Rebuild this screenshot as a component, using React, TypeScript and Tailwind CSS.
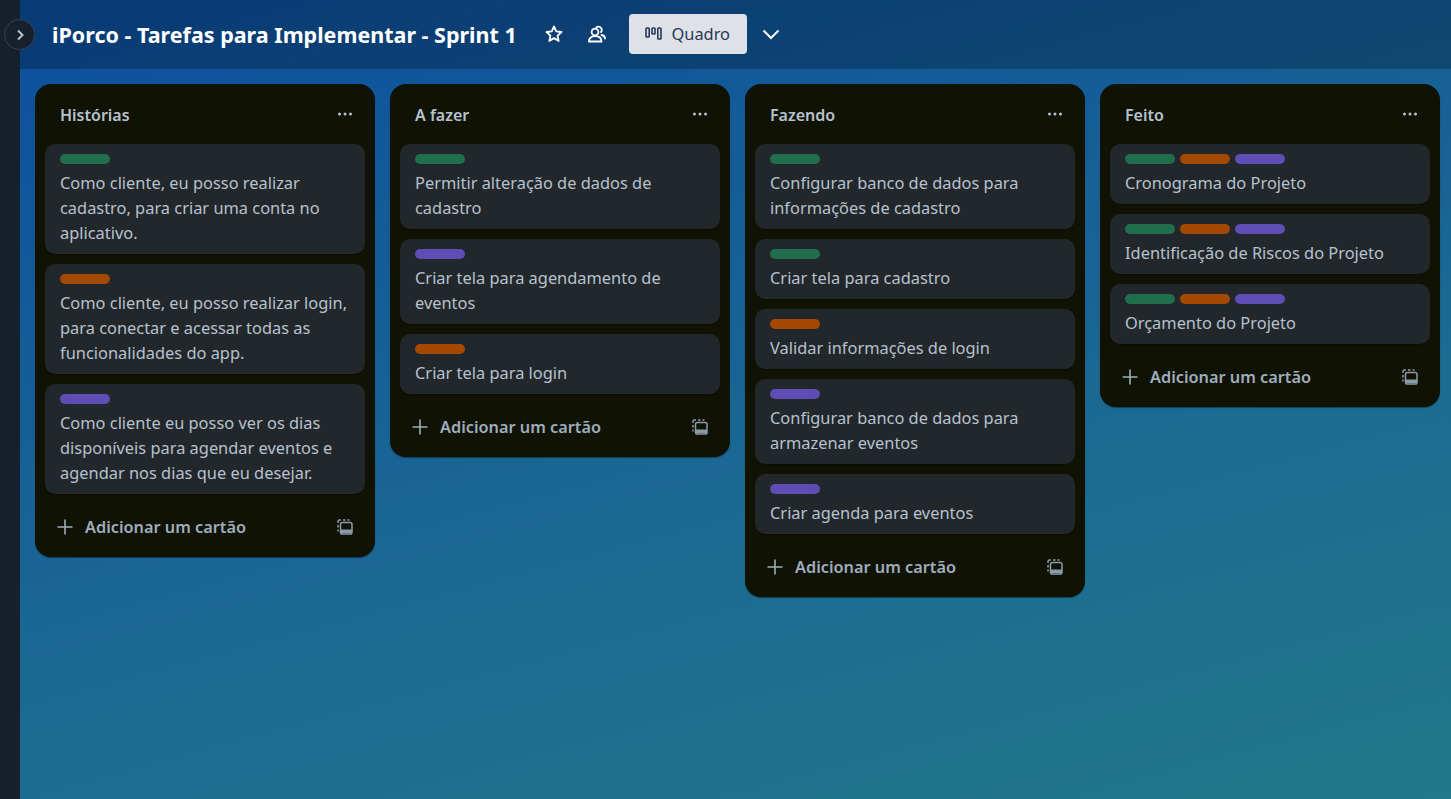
import React from "react";

const G = "bg-[#216e4e]";
const O = "bg-[#a54800]";
const P = "bg-[#5e4db2]";

type CardT = { labels: string[]; text: string };
type ListT = { title: string; cards: CardT[] };

const lists: ListT[] = [
  {
    title: "Histórias",
    cards: [
      { labels: [G], text: "Como cliente, eu posso realizar cadastro, para criar uma conta no aplicativo." },
      { labels: [O], text: "Como cliente, eu posso realizar login, para conectar e acessar todas as funcionalidades do app." },
      { labels: [P], text: "Como cliente eu posso ver os dias disponíveis para agendar eventos e agendar nos dias que eu desejar." },
    ],
  },
  {
    title: "A fazer",
    cards: [
      { labels: [G], text: "Permitir alteração de dados de cadastro" },
      { labels: [P], text: "Criar tela para agendamento de eventos" },
      { labels: [O], text: "Criar tela para login" },
    ],
  },
  {
    title: "Fazendo",
    cards: [
      { labels: [G], text: "Configurar banco de dados para informações de cadastro" },
      { labels: [G], text: "Criar tela para cadastro" },
      { labels: [O], text: "Validar informações de login" },
      { labels: [P], text: "Configurar banco de dados para armazenar eventos" },
      { labels: [P], text: "Criar agenda para eventos" },
    ],
  },
  {
    title: "Feito",
    cards: [
      { labels: [G, O, P], text: "Cronograma do Projeto" },
      { labels: [G, O, P], text: "Identificação de Riscos do Projeto" },
      { labels: [G, O, P], text: "Orçamento do Projeto" },
    ],
  },
];

function TemplateIcon() {
  return (
    <svg width="16" height="16" viewBox="0 0 16 16" fill="none" className="text-[#8c9bab]">
      <path d="M1 4V2.500A1.500 1.500 0 0 1 2.500 1H4M6 1h2.500M10.500 1H12.500M1 6v2.500M1 10.500V12.500" stroke="currentColor" strokeWidth="1.500" />
      <rect x="3.500" y="3.500" width="11.500" height="11.500" rx="1.800" stroke="currentColor" strokeWidth="1.500" />
      <rect x="3.500" y="10.500" width="11.500" height="3.500" fill="currentColor" />
    </svg>
  );
}

function List({ list }: { list: ListT }) {
  return (
    <div className="w-[340px] shrink-0 rounded-2xl bg-[#101204] px-[10px] shadow-[0_1px_1px_rgba(0,0,0,0.4)]">
      <div className="flex h-[60px] items-center justify-between pl-[15px] pr-[12px] pt-[2px]">
        <div className="text-[16px] font-semibold text-[#b6c2cf]">{list.title}</div>
        <svg width="16" height="16" viewBox="0 0 16 16" className="mb-[2px] text-[#b6c2cf]" fill="currentColor">
          <circle cx="2.500" cy="8" r="1.500" />
          <circle cx="8" cy="8" r="1.500" />
          <circle cx="13.500" cy="8" r="1.500" />
        </svg>
      </div>
      <div className="flex flex-col gap-[10px]">
        {list.cards.map((c) => (
          <div key={c.text} className="rounded-[10px] bg-[#22272b] px-[15px] pb-[9px] pt-[10px] shadow-[0_1px_1px_rgba(0,0,0,0.3)]">
            <div className="flex gap-[5px]">
              {c.labels.map((l, i) => (
                <div key={i} className={`h-[10px] w-[50px] rounded-full ${l}`} />
              ))}
            </div>
            <div className="mt-[6px] text-[16.4px] leading-[25px] text-[#b6c2cf]">{c.text}</div>
          </div>
        ))}
      </div>
      <div className="flex h-[63px] items-center justify-between pl-[11px] pr-[12px] pt-[3px]">
        <div className="flex items-center gap-[11px] text-[#9fadbc]">
          <svg width="18" height="18" viewBox="0 0 18 18" stroke="currentColor" strokeWidth="1.600" fill="none">
            <path d="M9 1.500v15M1.500 9h15" />
          </svg>
          <span className="text-[16.3px] font-semibold">Adicionar um cartão</span>
        </div>
        <TemplateIcon />
      </div>
    </div>
  );
}

export default function App() {
  return (
    <div className="relative flex h-[799px] w-[1451px] overflow-hidden font-['Noto_Sans','Open_Sans',sans-serif]">
      <div className="w-[20px] shrink-0 bg-[#17212d]" />
      <div className="flex min-w-0 flex-1 flex-col bg-[linear-gradient(165deg,#0c4f9e_0%,#1b6a92_60%,#21788a_100%)]">
        <header className="flex h-[69px] shrink-0 items-center bg-[#00000040] pb-[2px] pl-[32px]">
          <h1 className="mt-[4px] whitespace-nowrap text-[21.5px] font-bold text-white">iPorco - Tarefas para Implementar - Sprint 1</h1>
          <svg className="ml-[27px]" width="20" height="20" viewBox="0 0 24 24" fill="none" stroke="white" strokeWidth="2.200" strokeLinejoin="round">
            <path d="M12 3l2.700 5.900 6.300.7-4.700 4.300 1.300 6.300L12 17l-5.600 3.200 1.300-6.300L3 9.600l6.300-.7z" />
          </svg>
          <svg className="ml-[23px]" width="20" height="20" viewBox="0 0 20 20" fill="none" stroke="white" strokeWidth="1.800" strokeLinecap="round">
            <circle cx="8" cy="8" r="3.400" />
            <path d="M2 17.500h12.500c0-3.400-2.400-5.400-6.200-5.400S2 14.100 2 17.500z" />
            <path d="M9.500 3.200a3.400 3.400 0 0 1 5.300 2.800c0 .8-.3 1.500-.8 2M14.500 11c2 .4 3.500 1.500 3.500 3.500" />
          </svg>
          <div className="ml-[22px] flex h-[40px] w-[118px] items-center justify-center gap-[9px] rounded-[4px] bg-[#dfe1e6] text-[16.4px] text-[#253858]">
            <svg width="17" height="13" viewBox="0 0 17 13" fill="none" stroke="#253858" strokeWidth="1.600">
              <rect x="1" y="1" width="3.200" height="9" rx="0.800" />
              <rect x="7" y="1" width="3" height="6" rx="0.800" />
              <rect x="12.800" y="1" width="3.200" height="11" rx="0.800" />
            </svg>
            <span className="mt-[2px]">Quadro</span>
          </div>
          <svg className="ml-[14px]" width="20" height="20" viewBox="0 0 20 20" fill="none" stroke="white" strokeWidth="2">
            <path d="M2.500 6.500L10 14l7.500-7.500" />
          </svg>
        </header>
        <main className="flex flex-1 items-start gap-[15px] pl-[15px] pt-[15px]">
          {lists.map((l) => (
            <List key={l.title} list={l} />
          ))}
        </main>
      </div>
      <div className="absolute left-[4px] top-[19px] flex h-[31px] w-[31px] items-center justify-center rounded-full border border-[#38414d] bg-[#17212d] text-[#b6c2cf]">
        <svg width="10" height="12" viewBox="0 0 10 12" fill="none" stroke="currentColor" strokeWidth="2">
          <path d="M3 1.500L7.500 6 3 10.500" />
        </svg>
      </div>
    </div>
  );
}
